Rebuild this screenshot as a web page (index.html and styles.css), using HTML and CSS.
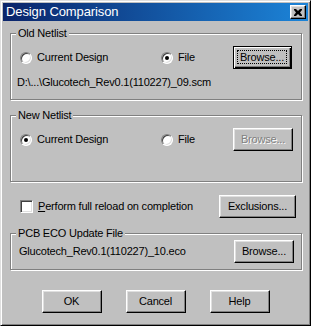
FILE: index.html
```html
<!DOCTYPE html>
<html>
<head>
<meta charset="utf-8">
<link rel="stylesheet" href="styles.css">
</head>
<body>
<div class="window">
  <div class="titlebar">
    <span class="title">Design Comparison</span>
    <span class="close"><svg width="8" height="7" viewBox="0 0 8 7"><path d="M0 0h2l2 2 2-2h2v1L6 3.5 8 6v1H6L4 5 2 7H0V6l2-2.5L0 1z" fill="#000"/></svg></span>
  </div>
  <div class="body">
    <div class="group group-old">
      <span class="legend">Old Netlist</span>
      <div class="row opts">
        <div class="opt opt-first"><span class="radio"></span>Current Design</div>
        <div class="opt opt-second"><span class="radio checked"></span>File</div>
        <div class="btn default"><span class="focus">Browse...</span></div>
      </div>
      <div class="path">D:\...\Glucotech_Rev0.1(110227)_09.scm</div>
    </div>

    <div class="group group-new">
      <span class="legend">New Netlist</span>
      <div class="row opts">
        <div class="opt opt-first"><span class="radio checked"></span>Current Design</div>
        <div class="opt opt-second"><span class="radio"></span>File</div>
        <div class="btn disabled">Browse...</div>
      </div>
    </div>

    <div class="row check-row">
      <div class="opt"><span class="checkbox"></span><span><u>P</u>erform full reload on completion</span></div>
      <div class="btn btn-wide">Exclusions...</div>
    </div>

    <div class="group group-eco">
      <span class="legend">PCB ECO Update File</span>
      <div class="row eco-row">
        <span class="eco-file">Glucotech_Rev0.1(110227)_10.eco</span>
        <div class="btn">Browse...</div>
      </div>
    </div>

    <div class="actions">
      <div class="btn">OK</div>
      <div class="btn">Cancel</div>
      <div class="btn">Help</div>
    </div>
  </div>
</div>
</body>
</html>
```
FILE: styles.css
```css
* { box-sizing: border-box; }
body {
  margin: 0;
  background: #c0c0c0;
  font-family: "Liberation Sans", Arial, sans-serif;
  font-size: 11px;
  letter-spacing: -0.2px;
  line-height: 13px;
  color: #000;
}
.window {
  width: 311px;
  height: 326px;
  background: #c0c0c0;
  border: 1px solid;
  border-color: #dfdfdf #000 #000 #dfdfdf;
  box-shadow: inset 1px 1px #fff, inset -1px -1px #808080;
  padding: 2px;
  display: flex;
  flex-direction: column;
}
.titlebar {
  height: 18px;
  background: linear-gradient(to right, #0a246a, #1c84d8);
  display: flex;
  align-items: center;
  justify-content: space-between;
  padding: 0 2px 0 3px;
  color: #fff;
  font-size: 13px;
  letter-spacing: -0.1px;
  line-height: 18px;
}
.close {
  width: 16px;
  height: 14px;
  background: #c0c0c0;
  border: 1px solid;
  border-color: #fff #000 #000 #fff;
  box-shadow: inset -1px -1px #808080, inset 1px 1px #dfdfdf;
  display: flex;
  align-items: center;
  justify-content: center;
}
.close svg { display: block; }
.body {
  padding: 12px 6px 0 7px;
  display: flex;
  flex-direction: column;
}
.group {
  position: relative;
  border: 1px solid #808080;
  box-shadow: inset 1px 1px #fff, 1px 1px #fff;
}
.legend {
  position: absolute;
  top: -7px;
  left: 5px;
  padding: 0 2px;
  background: #c0c0c0;
  line-height: 13px;
}
.group-old {
  height: 67px;
  padding: 12px 8px 0 6px;
}
.group-new {
  height: 67px;
  margin-top: 15px;
  padding: 12px 7px 0 6px;
}
.row {
  display: flex;
  align-items: center;
  height: 23px;
}
.opts { padding-left: 3px; }
.opt {
  display: flex;
  align-items: center;
  gap: 5px;
  white-space: nowrap;
}
.opt-first { width: 141px; }
.opt-second { width: 72px; }
.radio {
  position: relative;
  width: 12px;
  height: 12px;
  border-radius: 50%;
  background: #fff;
  border: 1px solid;
  border-color: #808080 #fff #fff #808080;
  box-shadow: inset 1px 1px #404040, inset -1px -1px #dfdfdf;
  display: flex;
  align-items: center;
  justify-content: center;
}
.radio.checked::after {
  content: "";
  width: 4px;
  height: 4px;
  border-radius: 50%;
  background: #000;
}
.checkbox {
  width: 13px;
  height: 13px;
  background: #fff;
  border: 1px solid;
  border-color: #808080 #fff #fff #808080;
  box-shadow: inset 1px 1px #404040, inset -1px -1px #dfdfdf;
}
.path {
  margin-top: 7px;
}
.btn {
  width: 60px;
  height: 23px;
  background: #c0c0c0;
  border: 1px solid;
  border-color: #fff #000 #000 #fff;
  box-shadow: inset -1px -1px #808080, inset 1px 1px #dfdfdf;
  display: flex;
  align-items: center;
  justify-content: center;
  white-space: nowrap;
}
.btn.default {
  width: 59px;
  border: 1px solid #000;
  box-shadow: inset 1px 1px #fff, inset -1px -1px #000, inset -2px -2px #808080;
  padding: 3px 4px 4px 3px;
}
.focus {
  flex: 1;
  align-self: stretch;
  border: 1px dotted #000;
  display: flex;
  align-items: center;
  justify-content: center;
}
.btn.disabled {
  color: #808080;
  text-shadow: 1px 1px #fff;
}
.check-row {
  margin-top: 13px;
  padding: 0 6px 0 10px;
  justify-content: space-between;
}
.btn-wide { width: 77px; }
.group-eco {
  height: 37px;
  margin-top: 15px;
  padding: 6px 7px 0 8px;
}
.eco-row { justify-content: space-between; }
.actions {
  margin-top: 20px;
  display: flex;
  justify-content: center;
  gap: 24px;
  margin-left: -1px;
}
```
